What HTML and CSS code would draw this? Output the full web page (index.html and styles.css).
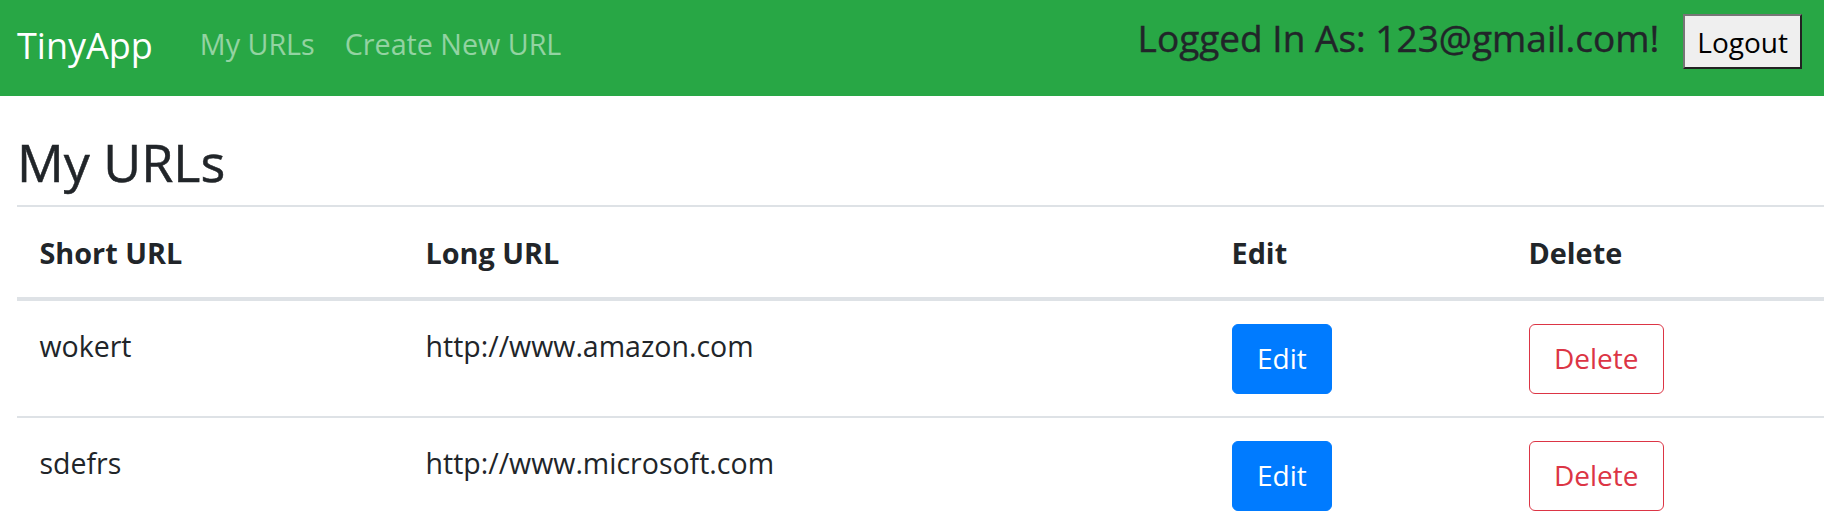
FILE: index.html
```html
<!DOCTYPE html>
<html lang="en">
<head>
<meta charset="utf-8">
<title>TinyApp</title>
<link rel="stylesheet" href="styles.css">
</head>
<body>
<nav class="navbar">
  <a class="brand" href="#">TinyApp</a>
  <ul class="nav-links">
    <li><a class="nav-link" href="#">My URLs</a></li>
    <li><a class="nav-link" href="#">Create New URL</a></li>
  </ul>
  <div class="user">
    <span class="logged">Logged In As: 123@gmail.com!</span>
    <button class="logout" type="button">Logout</button>
  </div>
</nav>
<main class="content">
  <h1 class="title">My URLs</h1>
  <table class="url-table">
    <colgroup>
      <col class="col-short">
      <col class="col-long">
      <col class="col-edit">
      <col class="col-delete">
    </colgroup>
    <thead>
      <tr>
        <th>Short URL</th>
        <th>Long URL</th>
        <th>Edit</th>
        <th>Delete</th>
      </tr>
    </thead>
    <tbody>
      <tr>
        <td>wokert</td>
        <td>http://www.amazon.com</td>
        <td><a class="btn btn-edit" href="#">Edit</a></td>
        <td><button class="btn btn-delete" type="button">Delete</button></td>
      </tr>
      <tr>
        <td>sdefrs</td>
        <td>http://www.microsoft.com</td>
        <td><a class="btn btn-edit" href="#">Edit</a></td>
        <td><button class="btn btn-delete" type="button">Delete</button></td>
      </tr>
    </tbody>
  </table>
</main>
</body>
</html>
```

FILE: styles.css
```css
html, body {
  margin: 0;
  padding: 0;
  background: #ffffff;
  overflow: hidden;
}

body {
  font-family: "Open Sans", "Liberation Sans", sans-serif;
  color: #212529;
  font-size: 28.5px;
  line-height: 45px;
}

.navbar {
  display: flex;
  align-items: flex-start;
  height: 96px;
  background: #28a745;
  padding: 0 22px 0 17px;
  box-sizing: border-box;
}

.brand {
  font-size: 36px;
  line-height: 48px;
  margin-top: 22px;
  margin-right: 32px;
  color: #ffffff;
  text-decoration: none;
  white-space: nowrap;
}

.nav-links {
  display: flex;
  list-style: none;
  margin: 25px 0 0 0;
  padding: 0;
}

.nav-link {
  display: block;
  padding: 0 15px;
  font-size: 28.7px;
  line-height: 38px;
  color: rgba(255, 255, 255, 0.5);
  text-decoration: none;
  white-space: nowrap;
}

.user {
  margin-left: auto;
  display: flex;
  align-items: flex-start;
  gap: 24px;
}

.logged {
  font-size: 37px;
  line-height: 50px;
  margin-top: 13px;
  color: #212529;
  white-space: nowrap;
  -webkit-text-stroke: 0.4px #212529;
}

.logout {
  margin-top: 14px;
  font-family: "Open Sans", "Liberation Sans", sans-serif;
  font-size: 28px;
  line-height: 38px;
  padding: 7px 12px 6px 12px;
  height: 55px;
  box-sizing: border-box;
  background: #efefef;
  color: #000000;
  border-style: solid;
  border-width: 2px;
  border-color: #767676 #222222 #222222 #767676;
  border-radius: 0;
}

.content {
  padding-left: 17px;
}

.title {
  font-size: 52px;
  line-height: 60px;
  font-weight: 400;
  margin: 36px 0 13px 0;
  color: #212529;
  -webkit-text-stroke: 0.5px #212529;
}

.url-table {
  width: 1807px;
  table-layout: fixed;
  border-collapse: separate;
  border-spacing: 0;
}

.col-short { width: 386px; }
.col-long { width: 806px; }
.col-edit { width: 297px; }
.col-delete { width: 318px; }

.url-table th,
.url-table td {
  padding: 22.5px;
  text-align: left;
  vertical-align: top;
  border-top: 2px solid #dee2e6;
  font-size: 28.5px;
  line-height: 45px;
  white-space: nowrap;
}

.url-table th {
  font-size: 28.8px;
  font-weight: 700;
  vertical-align: bottom;
  border-bottom: 4px solid #dee2e6;
}

.url-table tbody tr:first-child td {
  border-top: 0;
}

.btn {
  display: inline-block;
  box-sizing: border-box;
  height: 70px;
  padding: 11.5px 24.5px;
  font-family: "Open Sans", "Liberation Sans", sans-serif;
  font-size: 28px;
  line-height: 45px;
  border-radius: 6px;
  border: 1px solid transparent;
  text-decoration: none;
  vertical-align: top;
  background: transparent;
}

.btn-edit {
  background: #007bff;
  border-color: #007bff;
  color: #ffffff;
}

.btn-delete {
  color: #dc3545;
  border-color: #dc3545;
  background: #ffffff;
}
```
